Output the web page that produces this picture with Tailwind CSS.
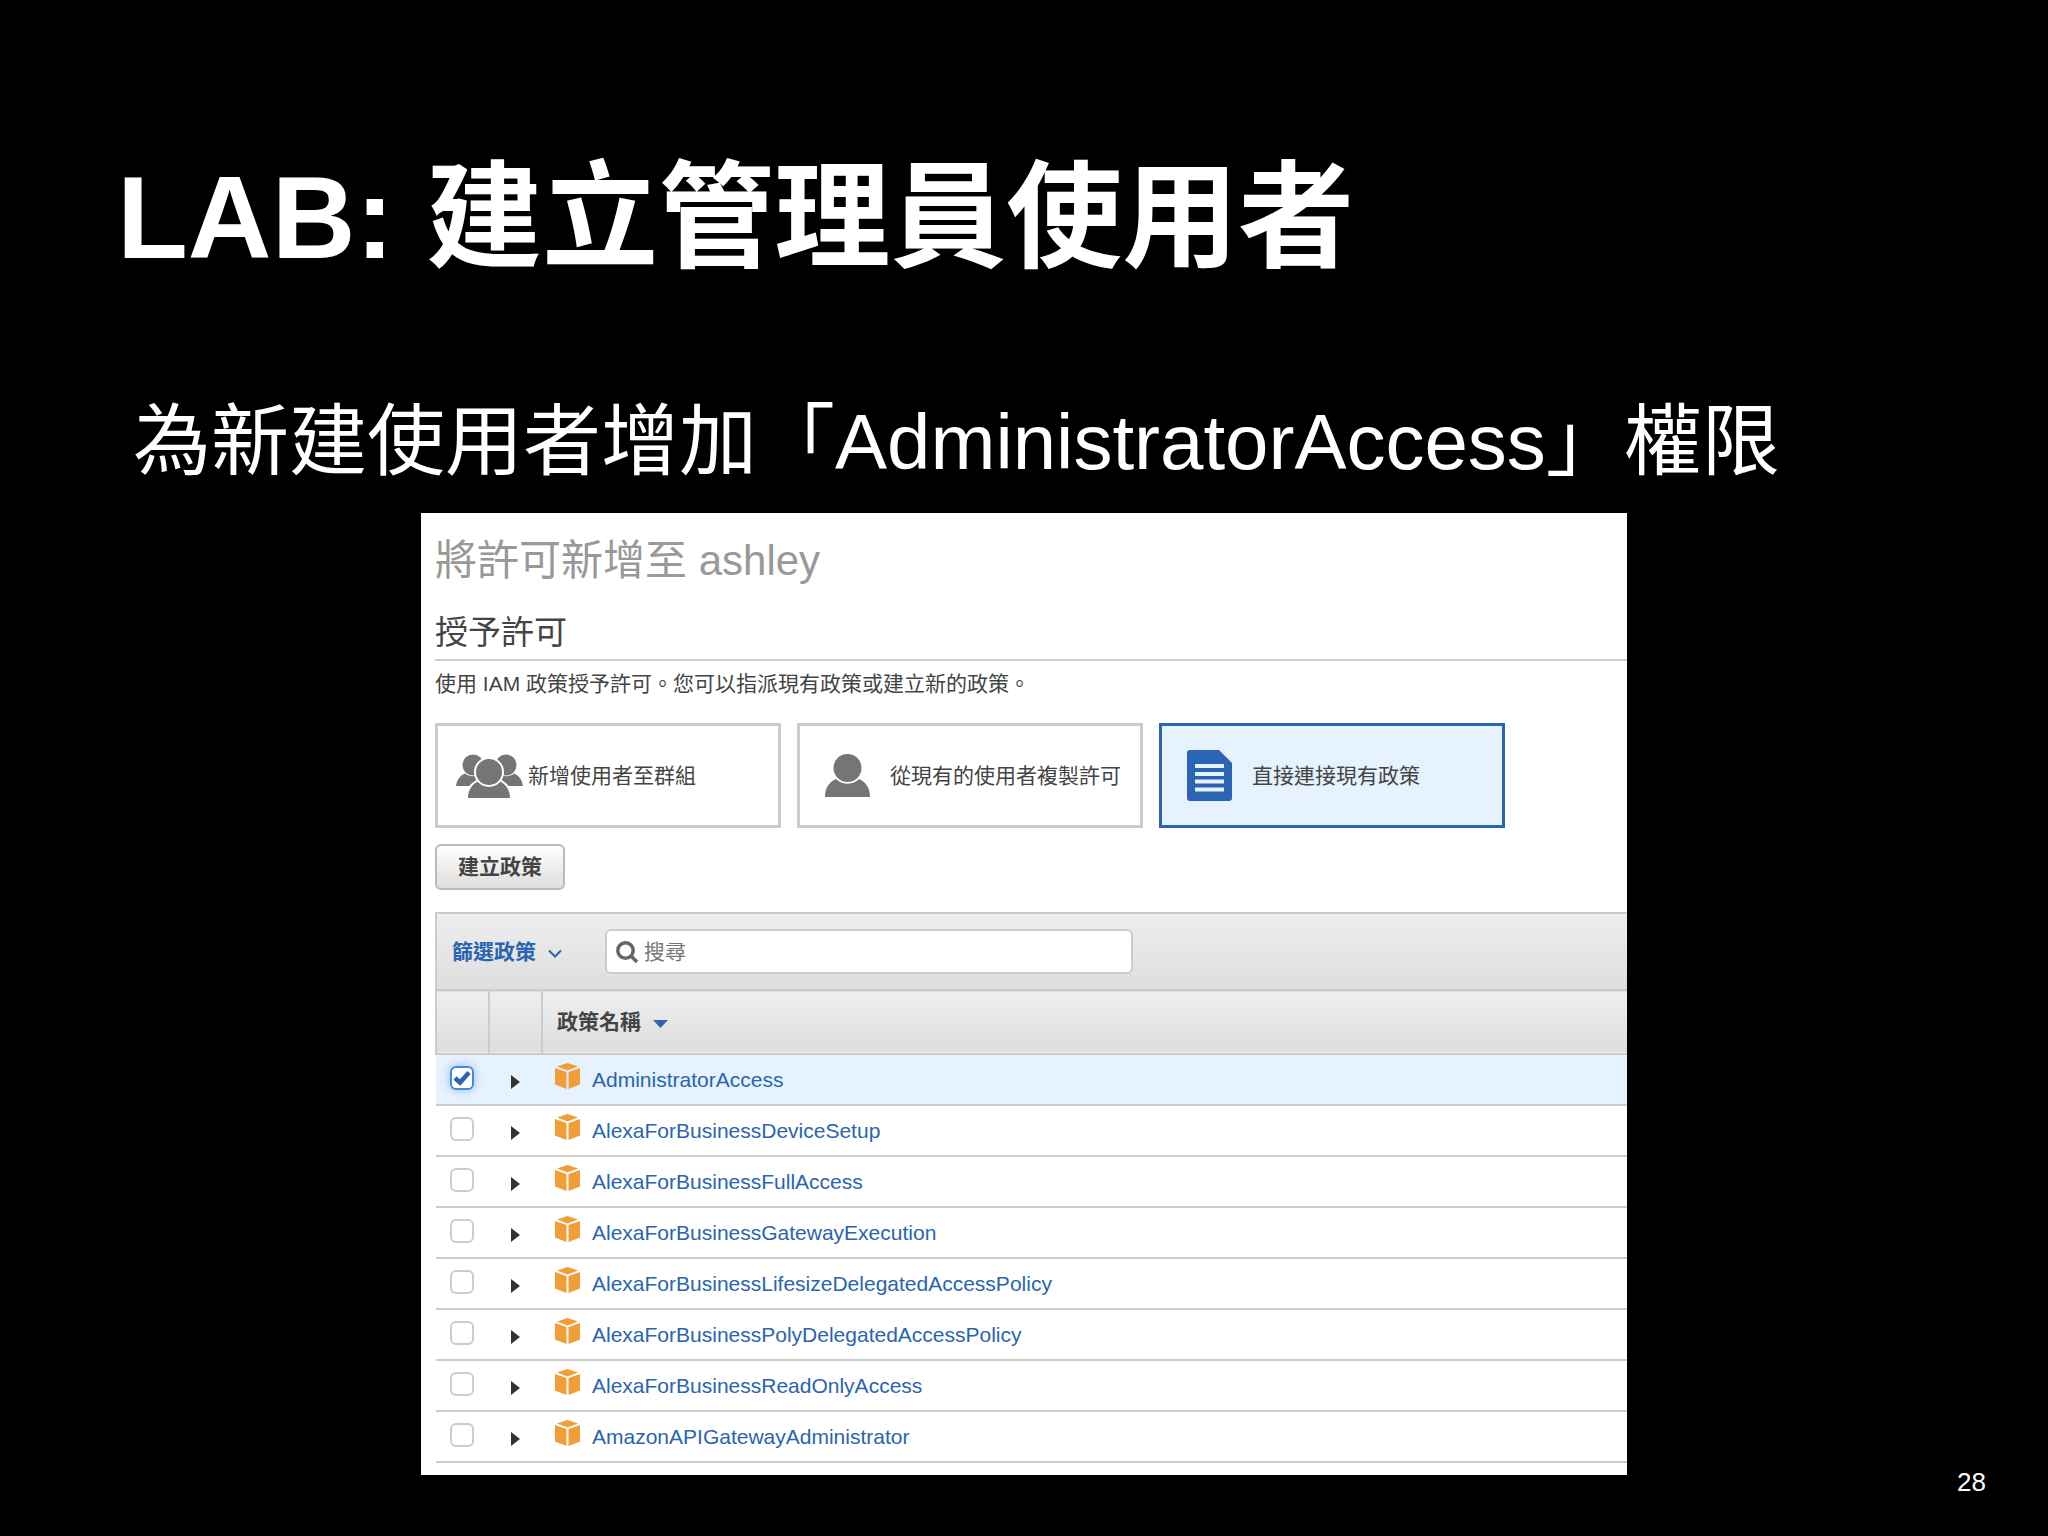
<!DOCTYPE html>
<html lang="zh-Hant">
<head>
    <meta charset="UTF-8">
    <meta name="viewport" content="width=device-width, initial-scale=1.0">
    <title>LAB: 建立管理員使用者</title>
    <script src="https://cdn.jsdelivr.net/npm/@tailwindcss/browser@4"></script>
</head>
<body class="bg-black text-white min-h-screen flex flex-col font-['Liberation_Sans','Noto_Sans_CJK_TC',sans-serif]">
<!-- 標題 -->
<header class="pl-[117px] pt-[148px]">
    <h1 class="text-[116px] leading-[140px] font-bold">LAB: 建立管理員使用者</h1>
    <p class="pl-4 mt-[104px] text-[78px] leading-[100px]">為新建使用者增加「AdministratorAccess」權限</p>
</header>

<main class="grid grid-cols-[1fr_1206px_1fr] mt-[21px]">
    <!-- IAM 主控台 -->
    <section class="col-start-2 mb-6 pl-[14px] pb-3 bg-white text-[#444] text-[21px] leading-[30px]">
        <h2 class="pt-[18px] text-[42px] leading-[60px] text-[#999]">將許可新增至 ashley</h2>
        <h3 class="pt-5 pb-1 text-[33px] leading-[44px] border-b-2 border-[#ccc]">授予許可</h3>
        <p class="mt-2">使用 IAM 政策授予許可。您可以指派現有政策或建立新的政策。</p>

        <!-- 許可方式 -->
        <div class="flex gap-4 mt-6">
            <button type="button" class="w-[346px] h-[105px] flex items-center border-3 border-[#ccc] text-left">
                <span class="w-[90px] pl-[18px]">
                    <svg class="w-[68px] h-[44px]" viewBox="0 0 68 44" fill="#757575">
                        <circle cx="17" cy="11" r="10.500"/>
                        <path d="M0 32C1 25 5 21 9 19.500C13 23 21 23 25 19.500C29 21 32 25 33 32Z"/>
                        <circle cx="50" cy="11" r="10.500"/>
                        <path d="M34 32C35 25 38 21 42 19.500C46 23 54 23 58 19.500C62 21 66 25 67 32Z"/>
                        <g stroke="#fff" stroke-width="4" paint-order="stroke">
                            <path d="M12 44C12 36 16 30 23 27C28 32 38 32 43 27C50 30 54 36 54 44Z"/>
                            <circle cx="33" cy="18" r="13"/>
                        </g>
                    </svg>
                </span>
                <span>新增使用者至群組</span>
            </button>
            <button type="button" class="w-[346px] h-[105px] flex items-center border-3 border-[#ccc] text-left">
                <span class="w-[90px] pl-[25px]">
                    <svg class="w-[45px] h-[43px]" viewBox="0 0 45 43" fill="#757575">
                        <path d="M0 43C0 34 4 28 11 25C17 31 28 31 34 25C41 28 45 34 45 43Z"/>
                        <circle cx="22.500" cy="14" r="15.500" fill="#fff"/>
                        <circle cx="22.500" cy="14" r="14"/>
                    </svg>
                </span>
                <span>從現有的使用者複製許可</span>
            </button>
            <button type="button" class="w-[346px] h-[105px] flex items-center border-3 border-[#2a64b2] bg-[#e6f2fe] text-left">
                <span class="w-[90px] pl-[25px]">
                    <svg class="w-[45px] h-[51px]" viewBox="0 0 45 51">
                        <path d="M3 0H32L45 13V48Q45 51 42 51H3Q0 51 0 48V3Q0 0 3 0Z" fill="#2a64b2"/>
                        <path d="M8 16H37M8 24H37M8 31.500H37M8 39.500H37" stroke="#e6f2fe" stroke-width="4"/>
                    </svg>
                </span>
                <span>直接連接現有政策</span>
            </button>
        </div>

        <button type="button" class="mt-4 w-[130px] h-[46px] font-bold rounded-md border-2 border-[#bbb] bg-linear-to-b from-white to-[#dedede]">建立政策</button>

        <!-- 篩選列 -->
        <div class="mt-[22px] h-[77px] flex items-center pl-[15px] border-l-2 border-t-2 border-[#ccc] bg-linear-to-b from-[#eee] to-[#dedede]">
            <button type="button" class="w-[153px] flex items-center gap-3 font-bold text-[#2a64b2]">
                篩選政策
                <svg class="w-[14px] h-[9px] mt-1" viewBox="0 0 14 9" fill="none" stroke="#2a64b2" stroke-width="2"><path d="M1 1.500L7 7.500L13 1.500"/></svg>
            </button>
            <label class="w-[528px] h-[45px] flex items-center gap-[6px] pl-[9px] rounded-md border-2 border-[#ccc] bg-white">
                <svg class="w-[22px] h-[22px]" viewBox="0 0 22 22" fill="none" stroke="#666" stroke-width="3.500"><circle cx="9.500" cy="9.500" r="7.700"/><path d="M15 15L21 21"/></svg>
                <input type="search" aria-label="搜尋" placeholder="搜尋" class="flex-1 outline-none placeholder:text-[#777]">
            </label>
        </div>

        <!-- 政策列表 -->
        <table class="w-full table-fixed border-collapse">
            <thead>
                <tr class="h-[64px] border-y-2 border-[#ccc] bg-linear-to-b from-[#eee] to-[#dedede]">
                    <th class="w-[53px] border-x-2 border-[#ccc]"></th>
                    <th class="w-[53px] border-r-2 border-[#ccc]"></th>
                    <th class="pl-[14px] text-left">
                        <button type="button" class="flex items-center gap-3 font-bold">
                            政策名稱
                            <svg class="w-[15px] h-[8px] mt-1" viewBox="0 0 15 8" fill="#2a64b2"><path d="M0 0H15L7.500 8Z"/></svg>
                        </button>
                    </th>
                </tr>
            </thead>
            <tbody id="policyRows"></tbody>
        </table>
    </section>

    <p class="self-end pr-[62px] text-right text-[26px] leading-[34px]">28</p>
</main>

<script>
    const policyRows = document.getElementById('policyRows');
    const policies = [
        'AdministratorAccess',
        'AlexaForBusinessDeviceSetup',
        'AlexaForBusinessFullAccess',
        'AlexaForBusinessGatewayExecution',
        'AlexaForBusinessLifesizeDelegatedAccessPolicy',
        'AlexaForBusinessPolyDelegatedAccessPolicy',
        'AlexaForBusinessReadOnlyAccess',
        'AmazonAPIGatewayAdministrator'
    ];

    // 產生每一列政策
    policies.forEach((name, i) => {
        policyRows.innerHTML += `
            <tr class="h-[51px] border-b-2 border-[#ccc] has-checked:bg-[#e6f2fe]">
                <td class="pl-[14px]">
                    <span class="relative block size-6 mb-1">
                        <input type="checkbox" aria-label="${name}" ${i === 0 ? 'checked' : ''} class="peer block size-6 appearance-none rounded-md border-2 border-[#ccc] bg-white checked:border-[#4a8ad8] checked:shadow-[0_0_10px_#8fbdf2]">
                        <svg class="hidden peer-checked:block absolute inset-0 size-6 pointer-events-none" viewBox="0 0 24 24" fill="none" stroke="#2a64b2" stroke-width="4.500"><path d="M5 12L10 16.500L19 6.500"/></svg>
                    </span>
                </td>
                <td class="pl-[22px]">
                    <button type="button" aria-label="展開" class="block mt-1"><svg class="w-[9px] h-[14px]" viewBox="0 0 9 14" fill="#333"><path d="M0 0L9 7L0 14Z"/></svg></button>
                </td>
                <td class="pl-[13px]">
                    <div class="flex items-center gap-3">
                        <svg class="w-[25px] h-[26px] mb-2" viewBox="0 0 25 26" fill="#f19d38">
                            <path d="M2 3.500L12.500 0L23 3.500L12.500 7.500Z"/>
                            <path d="M0 5L11.500 9V26L0 21.500Z"/>
                            <path d="M25 5L13.500 9V26L25 21.500Z"/>
                        </svg>
                        <a href="#" class="text-[#2a64b2]">${name}</a>
                    </div>
                </td>
            </tr>`;
    });
</script>
</body>
</html>
